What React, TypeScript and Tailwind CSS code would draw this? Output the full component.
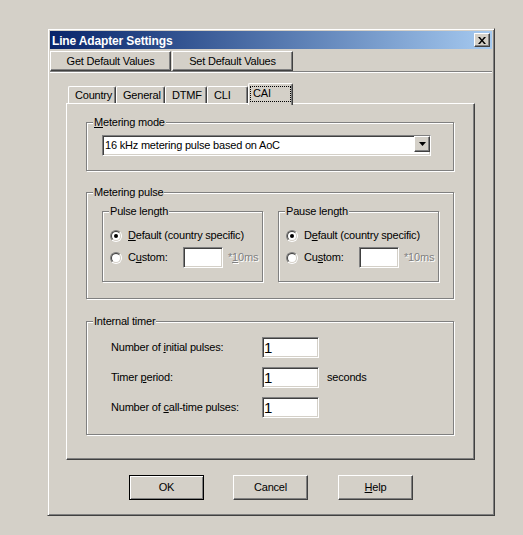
import React from "react";

const sunken =
  "bg-white border border-t-[#808080] border-l-[#808080] border-r-white border-b-white shadow-[inset_1px_1px_0_#404040,inset_-1px_-1px_0_#d4d0c8]";
const raised =
  "bg-[#d4d0c8] border border-t-white border-l-white border-r-[#404040] border-b-[#404040] shadow-[inset_-1px_-1px_0_#808080]";

function U({ children }: { children: React.ReactNode }) {
  return <span className="underline decoration-1 underline-offset-[1px]">{children}</span>;
}

function Group({
  label,
  className = "",
  children,
}: {
  label: React.ReactNode;
  className?: string;
  children?: React.ReactNode;
}) {
  return (
    <div
      className={`flex flex-col border border-[#808080] shadow-[inset_1px_1px_0_#fff,1px_1px_0_#fff] ${className}`}
    >
      <div className="-mt-[7px] ml-[6px] self-start bg-[#d4d0c8] px-[1px] leading-[13px] whitespace-nowrap">
        {label}
      </div>
      {children}
    </div>
  );
}

function Radio({ checked = false }: { checked?: boolean }) {
  return (
    <div className="w-[12px] h-[12px] shrink-0 rounded-full border border-t-[#808080] border-l-[#808080] border-r-white border-b-white">
      <div className="w-full h-full rounded-full bg-white border border-t-[#404040] border-l-[#404040] border-r-[#d4d0c8] border-b-[#d4d0c8] flex items-center justify-center">
        {checked && <div className="w-[4px] h-[4px] rounded-full bg-black" />}
      </div>
    </div>
  );
}

function LengthBox({
  title,
  def,
  custom,
  unit,
}: {
  title: React.ReactNode;
  def: React.ReactNode;
  custom: React.ReactNode;
  unit: React.ReactNode;
}) {
  return (
    <Group label={title} className="w-[161px] h-[71px]">
      <div className="mt-[11px] ml-[7px] flex items-center h-[13px]">
        <Radio checked />
        <span className="ml-[6px] whitespace-nowrap">{def}</span>
      </div>
      <div className="mt-[5px] ml-[7px] flex items-center h-[21px]">
        <Radio />
        <span className="ml-[6px] w-[55px] whitespace-nowrap">{custom}</span>
        <div className={`w-[40px] h-[21px] shrink-0 ${sunken}`} />
        <span className="ml-[5px] text-[#808080] [text-shadow:1px_1px_0_#fff] whitespace-nowrap">
          {unit}
        </span>
      </div>
    </Group>
  );
}

function TimerRow({
  label,
  suffix,
  className = "",
}: {
  label: React.ReactNode;
  suffix?: React.ReactNode;
  className?: string;
}) {
  return (
    <div className={`ml-[24px] flex items-center h-[21px] ${className}`}>
      <span className="w-[151px] whitespace-nowrap">{label}</span>
      <div
        className={`w-[57px] h-[21px] flex items-center pl-[1px] text-[15px] leading-[15px] tracking-normal ${sunken}`}
      >
        1
      </div>
      {suffix && <span className="ml-[8px]">{suffix}</span>}
    </div>
  );
}

function Tab({ label, w }: { label: string; w: string }) {
  return (
    <div
      className={`${w} h-[17px] pl-[6px] pt-[2px] border-t border-x border-t-white border-l-white border-r-[#404040] rounded-t-[2px] shadow-[inset_-1px_0_0_#808080] bg-[#d4d0c8] whitespace-nowrap`}
    >
      {label}
    </div>
  );
}

export default function App() {
  return (
    <div className="w-[523px] h-[535px] bg-[#d4d0c8] overflow-hidden pt-[28px] pl-[47px] font-['Liberation_Sans',Arial,sans-serif] text-[11px] leading-[13px] tracking-[-0.2px] text-black">
      <div className="w-[448px] h-[488px] flex flex-col border border-t-[#d4d0c8] border-l-[#d4d0c8] border-r-[#404040] border-b-[#404040] p-[2px] shadow-[inset_1px_1px_0_#fff,inset_-1px_-1px_0_#808080]">
        {/* Title bar */}
        <div className="h-[18px] shrink-0 flex items-center justify-between pl-[2px] pr-[2px] bg-linear-to-r from-[#0a246a] to-[#a6caf0]">
          <span className="pt-[2px] text-white font-bold text-[12px] leading-[14px] tracking-[-0.15px]">
            Line Adapter Settings
          </span>
          <div className={`w-[16px] h-[14px] flex items-center justify-center ${raised}`}>
            <svg width="8" height="7" viewBox="0 0 8 7">
              <path d="M0 0h2l2 2.5L6 0h2L5 3.5 8 7H6L4 4.5 2 7H0l3-3.5z" fill="#000" />
            </svg>
          </div>
        </div>

        {/* Toolbar buttons */}
        <div className="mt-[2px] flex gap-[1px]">
          <div className={`w-[121px] h-[20px] flex items-center justify-center ${raised}`}>
            Get Default Values
          </div>
          <div className={`w-[121px] h-[20px] flex items-center justify-center ${raised}`}>
            Set Default Values
          </div>
        </div>
        <div className="h-[2px] border-t border-t-[#808080] border-b border-b-white" />

        {/* Tabs */}
        <div className="mt-[10px] ml-[18px] h-[20px] flex items-end">
          <Tab label="Country" w="w-[48px]" />
          <Tab label="General" w="w-[49px]" />
          <Tab label="DTMF" w="w-[42px]" />
          <Tab label="CLI" w="w-[41px]" />
          <div className="relative z-10 w-[45px] h-[22px] -mb-[2px] border-t border-x border-t-white border-l-white border-r-[#404040] rounded-t-[2px] shadow-[inset_-1px_0_0_#808080] bg-[#d4d0c8]">
            <div className="mt-[2px] ml-[1px] w-[41px] h-[16px] border border-dotted border-black pl-[2px] leading-[13px]">
              CAI
            </div>
          </div>
        </div>

        {/* Tab panel */}
        <div className="ml-[16px] w-[409px] h-[357px] flex flex-col border border-t-white border-l-white border-r-[#404040] border-b-[#404040] shadow-[inset_-1px_-1px_0_#808080]">
          <Group
            label={
              <>
                <U>M</U>etering mode
              </>
            }
            className="mt-[18px] ml-[19px] w-[368px]"
          >
            <div className={`mt-[6px] ml-[15px] mb-[14px] w-[329px] h-[21px] flex ${sunken}`}>
              <span className="flex-1 self-center pl-[2px] whitespace-nowrap">
                16 kHz metering pulse based on AoC
              </span>
              <div className={`w-[16px] h-[16px] flex items-center justify-center ${raised}`}>
                <svg width="7" height="4" viewBox="0 0 7 4">
                  <path d="M0 0h7L3.5 4z" fill="#000" />
                </svg>
              </div>
            </div>
          </Group>

          <Group label="Metering pulse" className="mt-[21px] ml-[19px] w-[368px]">
            <div className="mt-[12px] mb-[16px] ml-[15px] flex gap-[15px]">
              <LengthBox
                title="Pulse length"
                def={
                  <>
                    <U>D</U>efault (country specific)
                  </>
                }
                custom={
                  <>
                    C<U>u</U>stom:
                  </>
                }
                unit={
                  <>
                    *<U>1</U>0ms
                  </>
                }
              />
              <LengthBox
                title="Pause length"
                def={
                  <>
                    D<U>e</U>fault (country specific)
                  </>
                }
                custom={
                  <>
                    Cu<U>s</U>tom:
                  </>
                }
                unit="*10ms"
              />
            </div>
          </Group>

          <Group label="Internal timer" className="mt-[22px] ml-[19px] w-[368px]">
            <TimerRow
              className="mt-[9px]"
              label={
                <>
                  Number of <U>i</U>nitial pulses:
                </>
              }
            />
            <TimerRow
              className="mt-[9px]"
              label={
                <>
                  Timer <U>p</U>eriod:
                </>
              }
              suffix="seconds"
            />
            <TimerRow
              className="mt-[9px] mb-[16px]"
              label={
                <>
                  Number of <U>c</U>all-time pulses:
                </>
              }
            />
          </Group>
        </div>

        {/* Dialog buttons */}
        <div className="mt-[15px] flex">
          <div className="ml-[79px] w-[75px] h-[25px] flex items-center justify-center border border-black shadow-[inset_1px_1px_0_#fff,inset_-1px_-1px_0_#808080]">
            OK
          </div>
          <div className={`ml-[29px] w-[75px] h-[25px] flex items-center justify-center ${raised}`}>
            Cancel
          </div>
          <div className={`ml-[30px] w-[75px] h-[25px] flex items-center justify-center ${raised}`}>
            <U>H</U>elp
          </div>
        </div>
      </div>
    </div>
  );
}
